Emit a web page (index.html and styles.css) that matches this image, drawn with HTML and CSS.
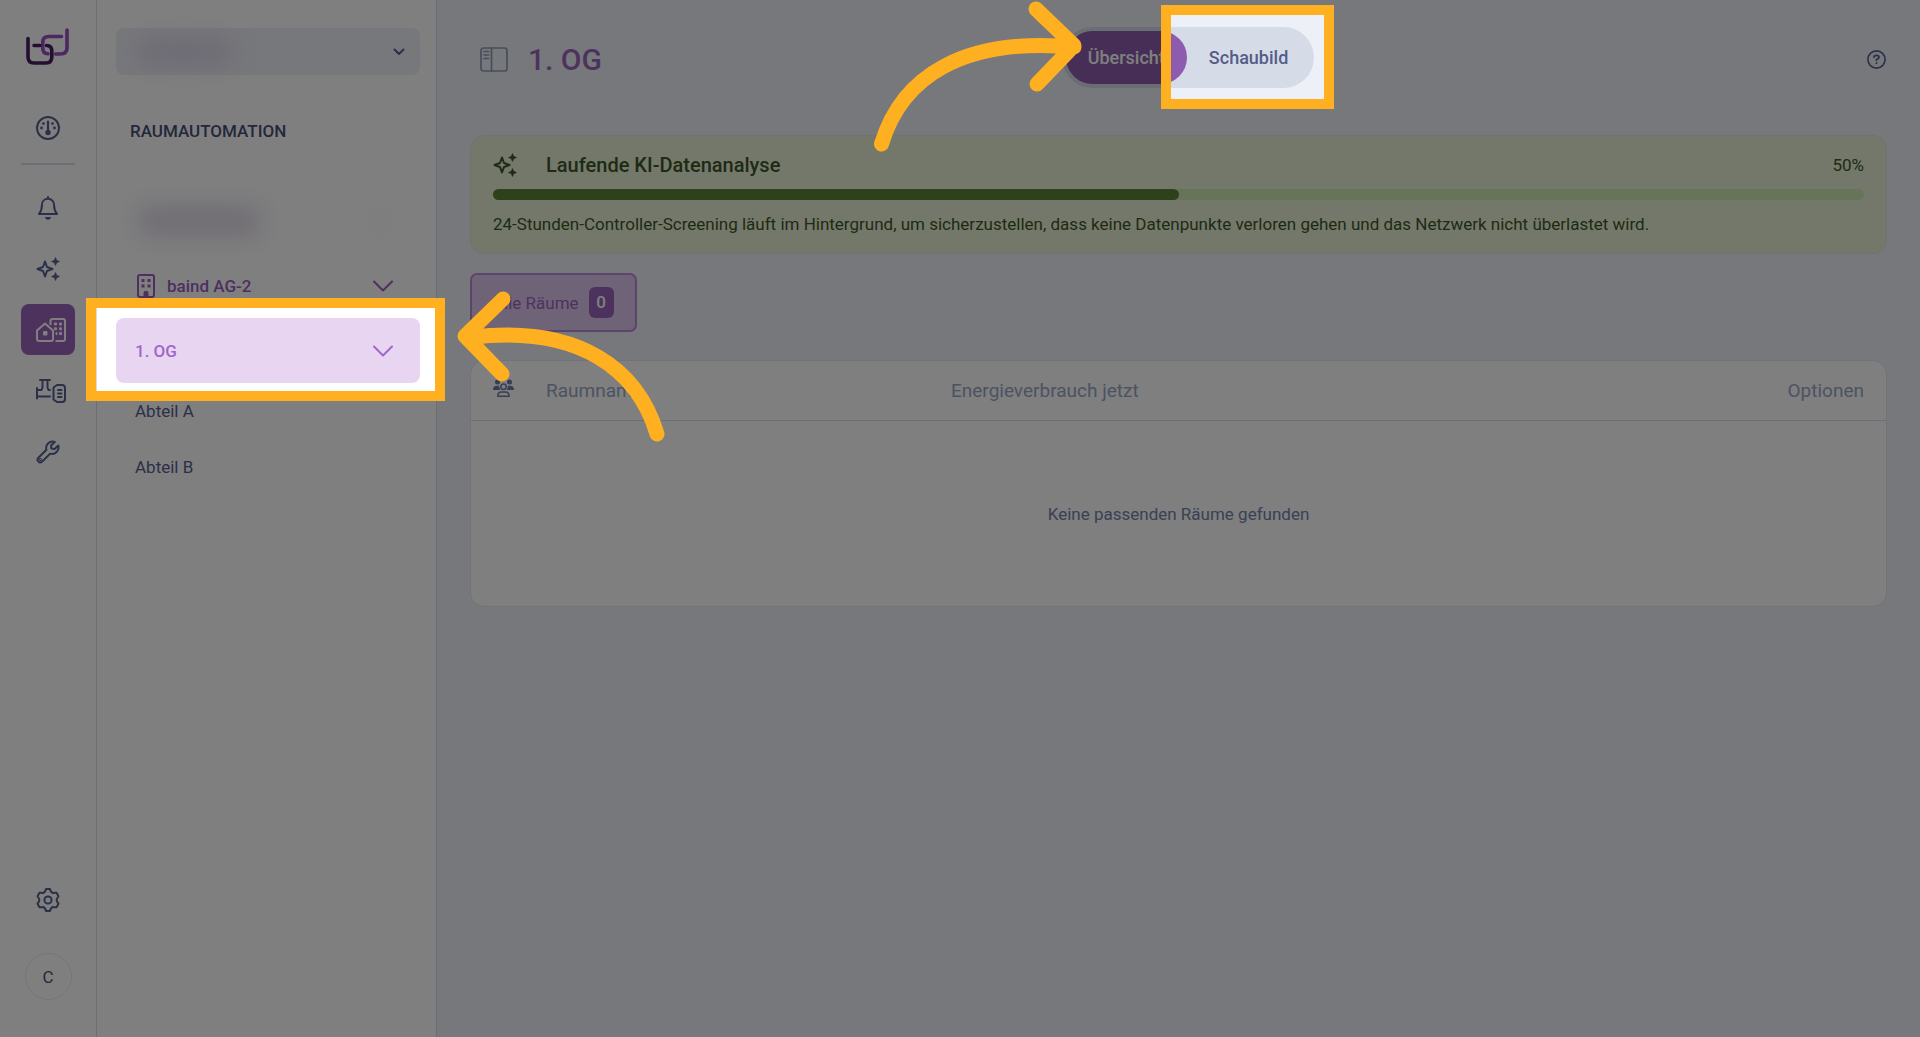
FILE: index.html
```html
<!DOCTYPE html>
<html lang="de">
<head>
<meta charset="utf-8">
<meta name="viewport" content="width=device-width, initial-scale=1">
<title>Raumautomation – 1. OG</title>
<link rel="stylesheet" href="styles.css">
</head>
<body>
<svg class="defs" aria-hidden="true">
  <symbol id="sparkles" viewBox="0 0 24 24">
    <path d="M9 4.500 L11 10 L16.500 12 L11 14 L9 19.500 L7 14 L1.500 12 L7 10 Z" fill="none" stroke="currentColor" stroke-width="2" stroke-linejoin="round"/>
    <path d="M19.500 0.500 L20.700 3.300 L23.500 4.500 L20.700 5.700 L19.500 8.500 L18.300 5.700 L15.500 4.500 L18.300 3.300 Z M19.500 15.500 L20.700 18.300 L23.500 19.500 L20.700 20.700 L19.500 23.500 L18.300 20.700 L15.500 19.500 L18.300 18.300 Z" fill="currentColor" stroke="currentColor" stroke-width=".6" stroke-linejoin="round"/>
  </symbol>
  <symbol id="chevron" viewBox="0 0 20 12">
    <path d="M1 1.500 L10 10.500 L19 1.500" fill="none" stroke="currentColor" stroke-width="2" stroke-linecap="round" stroke-linejoin="round"/>
  </symbol>
</svg>

<div class="app">
  <nav class="rail" aria-label="Hauptnavigation">
    <a class="logo" href="#" aria-label="Startseite">
      <svg width="44" height="38" viewBox="0 0 44 38" fill="none" stroke-width="3.600" stroke-linecap="round">
        <path class="logo-light" d="M35.500 8.500 H23 Q16.800 8.500 16.800 14 V20.500 Q16.800 25.500 22 25.800 M29.500 26 H34 Q41 26 41 20 V2"/>
        <path class="logo-dark" d="M2 10.500 V29 Q2 35 8 35 H20 Q25.800 35 25.800 29 V23 Q25.800 17.500 20.500 17.500 M8 17.500 H14"/>
      </svg>
    </a>
    <a class="rail-item" href="#" aria-label="Dashboard">
      <svg width="24" height="24" viewBox="0 0 24 24" fill="currentColor">
        <circle cx="12" cy="12" r="11" fill="none" stroke="currentColor" stroke-width="2"/>
        <path d="M12 5.500 V15" fill="none" stroke="currentColor" stroke-width="2.200" stroke-linecap="round"/>
        <circle cx="12" cy="16.500" r="2.700"/><circle cx="7.500" cy="7.600" r="1.400"/><circle cx="16.500" cy="7.600" r="1.400"/><circle cx="5.500" cy="12" r="1.400"/><circle cx="18.500" cy="12" r="1.400"/>
      </svg>
    </a>
    <hr class="rail-line">
    <div class="rail-group">
      <a class="rail-item" href="#" aria-label="Alarme">
        <svg width="24" height="24" viewBox="0 0 24 24">
          <path d="M12 1 V2.500 M12 2.800 C8.300 2.800 5.900 5.600 5.900 9.200 C5.900 13.500 5.200 15.300 3 18 H21 C18.800 15.300 18.100 13.500 18.100 9.200 C18.100 5.600 15.700 2.800 12 2.800 Z" fill="none" stroke="currentColor" stroke-width="2" stroke-linecap="round" stroke-linejoin="round"/>
          <path d="M9 21 H15 Q14.500 23.800 12 23.800 Q9.500 23.800 9 21 Z" fill="currentColor"/>
        </svg>
      </a>
      <a class="rail-item" href="#" aria-label="KI"><svg width="24" height="24"><use href="#sparkles"/></svg></a>
      <a class="rail-item active" href="#" aria-label="Raumautomation" aria-current="page">
        <svg class="wide" width="30" height="24" viewBox="0 0 30 24" fill="none" stroke="currentColor" stroke-width="2" stroke-linejoin="round">
          <path d="M1 12.500 L9 5.500 L17 12.500 V21 Q17 23 15 23 H3 Q1 23 1 21 Z M14.500 7 V3 Q14.500 1 16.500 1 H27 Q29 1 29 3 V21 Q29 23 27 23 H19.500"/>
          <path d="M7.500 13.500 h3.500 v3.500 h-3.500 Z M18.500 5 h2 v2 h-2 Z M23.500 5 h2 v2 h-2 Z M18.500 9.800 h2 v2 h-2 Z M23.500 9.800 h2 v2 h-2 Z M20 14.600 h1 v2 h-1 Z M23.500 14.600 h2 v2 h-2 Z" fill="currentColor" stroke-width="1"/>
        </svg>
      </a>
      <a class="rail-item" href="#" aria-label="Anlagen">
        <svg class="wide" width="30" height="24" viewBox="0 0 30 24" fill="none" stroke="currentColor" stroke-width="2" stroke-linecap="round" stroke-linejoin="round">
          <path d="M4 1 H14 M6.500 1 V8.500 L5.500 11 H1 M11.500 1 V8.500 L12.500 11 H14 M1 9 V19.500 M1 17.500 H14"/>
          <path d="M21 6 H26 Q29 6 29 9 V20 Q29 23 26 23 H21 L17.500 20.500 V8.500 Z M22 11 H25.500 M22 14.500 H25.500 M22 18 H25.500"/>
        </svg>
      </a>
      <a class="rail-item" href="#" aria-label="Service">
        <svg width="24" height="24" viewBox="0 0 24 24" fill="none" stroke="currentColor" stroke-width="2" stroke-linejoin="round">
          <path d="M18.800 1.900 A6.500 6.500 0 0 0 10.400 9.800 L2.200 18 A2.700 2.700 0 0 0 6 21.800 L14.200 13.600 A6.500 6.500 0 0 0 22.300 5.600 L18.600 9 L15.400 8.600 L15 5.400 Z"/>
          <circle cx="4.400" cy="19.600" r=".5"/>
        </svg>
      </a>
    </div>
    <div class="rail-foot">
      <a class="rail-item" href="#" aria-label="Einstellungen">
        <svg width="24" height="24" viewBox="0 0 24 24" fill="none" stroke="currentColor" stroke-width="2" stroke-linejoin="round">
          <path d="M10 1 H14 Q14.800 4.600 17 5 Q19 4.500 20.500 4.800 L22.500 8.300 Q20.600 10.500 20.600 12 Q20.600 13.500 22.500 15.700 L20.500 19.200 Q19 19.500 17 19 Q14.800 19.400 14 23 H10 Q9.200 19.400 7 19 Q5 19.500 3.500 19.200 L1.500 15.700 Q3.400 13.500 3.400 12 Q3.400 10.500 1.500 8.300 L3.500 4.800 Q5 4.500 7 5 Q9.200 4.600 10 1 Z"/>
          <circle cx="12" cy="12" r="3.600"/>
        </svg>
      </a>
      <button class="avatar" type="button">C</button>
    </div>
  </nav>

  <aside class="side">
    <button class="picker" type="button" aria-label="Standort">
      <span class="blur blur-picker"></span>
      <svg width="12" height="8" viewBox="0 0 12 8"><path d="M1.500 1.500 L6 6 L10.500 1.500" fill="none" stroke="currentColor" stroke-width="2" stroke-linecap="round" stroke-linejoin="round"/></svg>
    </button>
    <h2 class="side-title">RAUMAUTOMATION</h2>
    <ul class="tree">
      <li class="row building"><span class="blur blur-row"></span><span class="blur blur-dot"></span></li>
      <li><a class="row building" href="#">
        <svg width="18" height="24" viewBox="0 0 18 24" fill="currentColor"><rect x="1" y="1" width="16" height="22" rx="2" fill="none" stroke="currentColor" stroke-width="2"/><path d="M4.500 5 h3 v3 h-3 Z M10.500 5 h3 v3 h-3 Z M4.500 10.500 h3 v3 h-3 Z M10.500 10.500 h3 v3 h-3 Z M6.500 23 V19 Q6.500 16.700 9 16.700 Q11.500 16.700 11.500 19 V23 Z"/></svg>
        <span>baind AG-2</span>
        <svg class="chev" width="20" height="12"><use href="#chevron"/></svg>
      </a></li>
      <li><a class="row floor" href="#" aria-current="true"><span>1. OG</span><svg class="chev" width="20" height="12"><use href="#chevron"/></svg></a></li>
      <li><a class="row room" href="#">Abteil A</a></li>
      <li><a class="row room" href="#">Abteil B</a></li>
    </ul>
  </aside>

  <main class="main">
    <header class="head">
      <div class="head-title">
        <svg width="28" height="25" viewBox="0 0 28 25" fill="none" stroke="currentColor" stroke-width="1.700" stroke-linecap="round"><rect x="1" y="1" width="26" height="23" rx="2.500"/><path d="M11.500 1 V24 M4 4.500 H8.500 M4 8 H8.500 M4 11.500 H8.500"/></svg>
        <h1>1. OG</h1>
      </div>
      <div class="toggle">
        <button class="on" type="button" aria-pressed="true">Übersicht</button>
        <button type="button" aria-pressed="false">Schaubild</button>
      </div>
      <button class="help" type="button" aria-label="Hilfe">
        <svg width="19" height="19" viewBox="0 0 19 19" fill="none" stroke="currentColor" stroke-width="1.600" stroke-linecap="round"><circle cx="9.500" cy="9.500" r="8.600"/><path d="M7 7 Q7 5.400 9.500 5.400 Q12 5.400 12 7.300 Q12 8.700 9.500 9.500 V10.200 M9.500 13 V13.200" stroke-width="1.800"/></svg>
      </button>
    </header>

    <section class="banner">
      <div class="banner-top">
        <svg width="24" height="24"><use href="#sparkles"/></svg>
        <h2>Laufende KI-Datenanalyse</h2>
        <span>50%</span>
      </div>
      <div class="bar"><div class="bar-fill" style="width:50%"></div></div>
      <p>24-Stunden-Controller-Screening läuft im Hintergrund, um sicherzustellen, dass keine Datenpunkte verloren gehen und das Netzwerk nicht überlastet wird.</p>
    </section>

    <button class="filter" type="button">Alle Räume <span class="count">0</span></button>

    <table class="rooms">
      <thead>
        <tr>
          <th class="c-icon">
            <svg width="21" height="18" viewBox="0 0 21 18" fill="currentColor"><circle cx="4.500" cy="3" r="2.500"/><circle cx="16.500" cy="3" r="2.500"/><path d="M0 11 Q0 6.700 4 6.700 H6 Q6.200 9.500 7.500 11 Z M21 11 Q21 6.700 17 6.700 H15 Q14.800 9.500 13.500 11 Z"/><circle cx="10.500" cy="7.800" r="2.700" fill="none" stroke="currentColor" stroke-width="1.500"/><path d="M4.800 17.200 Q4.800 13 8.500 13 H12.500 Q16.200 13 16.200 17.200 Z" fill="none" stroke="currentColor" stroke-width="1.500" stroke-linejoin="round"/></svg>
          </th>
          <th class="c-name">Raumname</th>
          <th>Energieverbrauch jetzt</th>
          <th class="c-opt">Optionen</th>
        </tr>
      </thead>
      <tbody>
        <tr><td colspan="4">Keine passenden Räume gefunden</td></tr>
      </tbody>
    </table>
  </main>
</div>

<svg class="tour" width="100%" height="100%" aria-hidden="true">
  <mask id="spots">
    <rect width="100%" height="100%" fill="#fff"/>
    <rect x="96" y="308" width="339" height="83" fill="#000"/>
    <rect x="1170" y="15" width="154" height="84" fill="#000"/>
  </mask>
  <rect width="100%" height="100%" fill="#000" fill-opacity=".5" mask="url(#spots)"/>
  <g class="marks">
    <rect class="frame" x="91" y="303" width="349" height="93"/>
    <rect class="frame" x="1166" y="10" width="163" height="94"/>
    <path class="arrow" d="M881.500 144 C902 76 964 37 1074 47 M1036 9 L1074 45.500 L1037 84"/>
    <path class="arrow" d="M657 434 C638 370 580 325 473 337 M503 299 L465 336 L502 374"/>
  </g>
</svg>
</body>
</html>
```
FILE: styles.css
```css
:root {
  --ink: #566190;
  --ink-dark: #494f79;
  --muted: #97a6c6;
  --purple: #9a65bd;
  --line: #d5dcea;
  --page: #eef0f7;
}

* { box-sizing: border-box; }

body {
  margin: 0;
  font-family: Roboto, "Liberation Sans", sans-serif;
  font-size: 17px;
  line-height: 24px;
  color: var(--ink);
  background: var(--page);
}

h1, h2, p, ul { margin: 0; padding: 0; }
ul { list-style: none; }
a { color: inherit; text-decoration: none; }
button { font: inherit; color: inherit; border: 0; background: none; padding: 0; }
svg { display: block; flex: none; }
.defs { position: absolute; width: 0; height: 0; }

.app { display: flex; min-height: 100vh; }

/* icon rail */
.rail {
  width: 97px;
  flex: none;
  display: flex;
  flex-direction: column;
  align-items: center;
  padding: 28px 0 37px;
  background: #fff;
  border-right: 1px solid var(--line);
}
.logo { margin-bottom: 36px; }
.logo-light { stroke: #9a4fc4; }
.logo-dark { stroke: #4a1f60; }
.rail-item {
  display: flex;
  align-items: center;
  justify-content: center;
  width: 54px;
  height: 51px;
  border-radius: 8px;
}
.rail-item.active { background: var(--purple); color: #fff; }
.rail-item .wide { margin-left: 6px; }
.rail-line {
  width: 54px;
  height: 2px;
  margin: 10px 0 17px;
  border: 0;
  background: var(--line);
}
.rail-group { display: flex; flex-direction: column; gap: 10px; }
.rail-foot {
  margin-top: auto;
  display: flex;
  flex-direction: column;
  align-items: center;
  gap: 28px;
}
.avatar {
  width: 47px;
  height: 47px;
  border: 1px solid #e8ebf3;
  border-radius: 50%;
  color: var(--ink-dark);
}

/* tree panel */
.side {
  width: 340px;
  flex: none;
  padding: 28px 16px 28px 19px;
  background: #fff;
  border-right: 1px solid var(--line);
}
.picker {
  display: flex;
  align-items: center;
  justify-content: space-between;
  width: 100%;
  height: 47px;
  padding: 0 15px 0 20px;
  border-radius: 8px;
  background: var(--page);
}
.blur { display: block; border-radius: 12px; filter: blur(12px); }
.blur-picker { width: 96px; height: 26px; background: #dad3e8; }
.blur-row { width: 124px; height: 32px; background: #e2dae8; }
.blur-dot { width: 24px; height: 32px; margin-left: auto; background: #fafafd; }
.side-title {
  padding: 44px 14px 45px;
  font-size: 17px;
  line-height: 24px;
  font-weight: 500;
  color: var(--ink-dark);
}
.row {
  display: flex;
  align-items: center;
  height: 65px;
  padding: 0 27px 0 19px;
  border-radius: 8px;
}
.row .chev { margin-left: auto; }
.building { gap: 12px; padding-left: 21px; color: #9c5fc0; font-weight: 500; }
.floor { background: #e8d5f2; color: #a066c8; font-weight: 500; }
.room { height: 56px; }

/* content */
.main { flex: 1; min-width: 0; padding: 27px 33px; }
.head {
  display: grid;
  grid-template-columns: 1fr auto 1fr;
  align-items: center;
  margin: 0 -9px 47px 10px;
}
.head-title { display: flex; align-items: center; gap: 20px; padding-top: 4px; color: #8d9bbb; }
.head-title h1 { font-size: 30px; line-height: 40px; font-weight: 500; color: var(--purple); }
.toggle { display: flex; padding: 4px; border-radius: 31px; background: #d5dce8; }
.toggle button {
  height: 53px;
  padding: 0 22px;
  border-radius: 27px;
  font-size: 18px;
  font-weight: 500;
  color: #555c88;
}
.toggle .on { background: #8e5cae; color: #fff; }
.help { justify-self: end; padding: 14px 10px 10px; }

.banner {
  padding: 17px 22px;
  border: 1px solid #e0e4e0;
  border-radius: 14px;
  background: #e8f1d5;
  color: #3c5728;
}
.banner-top { display: flex; align-items: center; line-height: 24px; }
.banner-top h2 { margin-left: 29px; font-size: 20px; font-weight: 500; line-height: 24px; }
.banner-top span { margin-left: auto; }
.bar {
  height: 11px;
  margin: 12px 0;
  border-radius: 6px;
  background: #d0e8b0;
}
.bar-fill { height: 100%; border-radius: 6px; background: #5a8234; }

.filter {
  display: flex;
  align-items: center;
  gap: 10px;
  height: 59px;
  margin: 19px 0 28px;
  padding: 0 21px;
  border: 2px solid #b888d4;
  border-radius: 7px;
  background: #dfc8ee;
  color: var(--purple);
}
.count {
  width: 25px;
  border-radius: 6px;
  line-height: 31px;
  font-weight: 500;
  color: #fff;
  background: var(--purple);
}

.rooms {
  width: 100%;
  border: 1px solid #e2e6f0;
  border-spacing: 0;
  border-radius: 14px;
  background: #fff;
}
.rooms th {
  height: 60px;
  padding: 0 22px 0 0;
  border-bottom: 1px solid var(--line);
  text-align: left;
  font-size: 19px;
  font-weight: 400;
  color: var(--muted);
}
.rooms .c-icon { width: 75px; padding: 0 0 6px 22px; color: #6c7caa; }
.rooms .c-name { width: 405px; }
.rooms .c-opt { text-align: right; }
.rooms td { height: 185px; padding: 0; text-align: center; color: #7482ab; }

/* guided tour layer */
.tour { position: absolute; inset: 0; pointer-events: none; }
.marks { fill: none; stroke: #ffb020; }
.frame { stroke-width: 10px; }
.arrow { stroke-width: 15px; stroke-linecap: round; stroke-linejoin: round; }
```
